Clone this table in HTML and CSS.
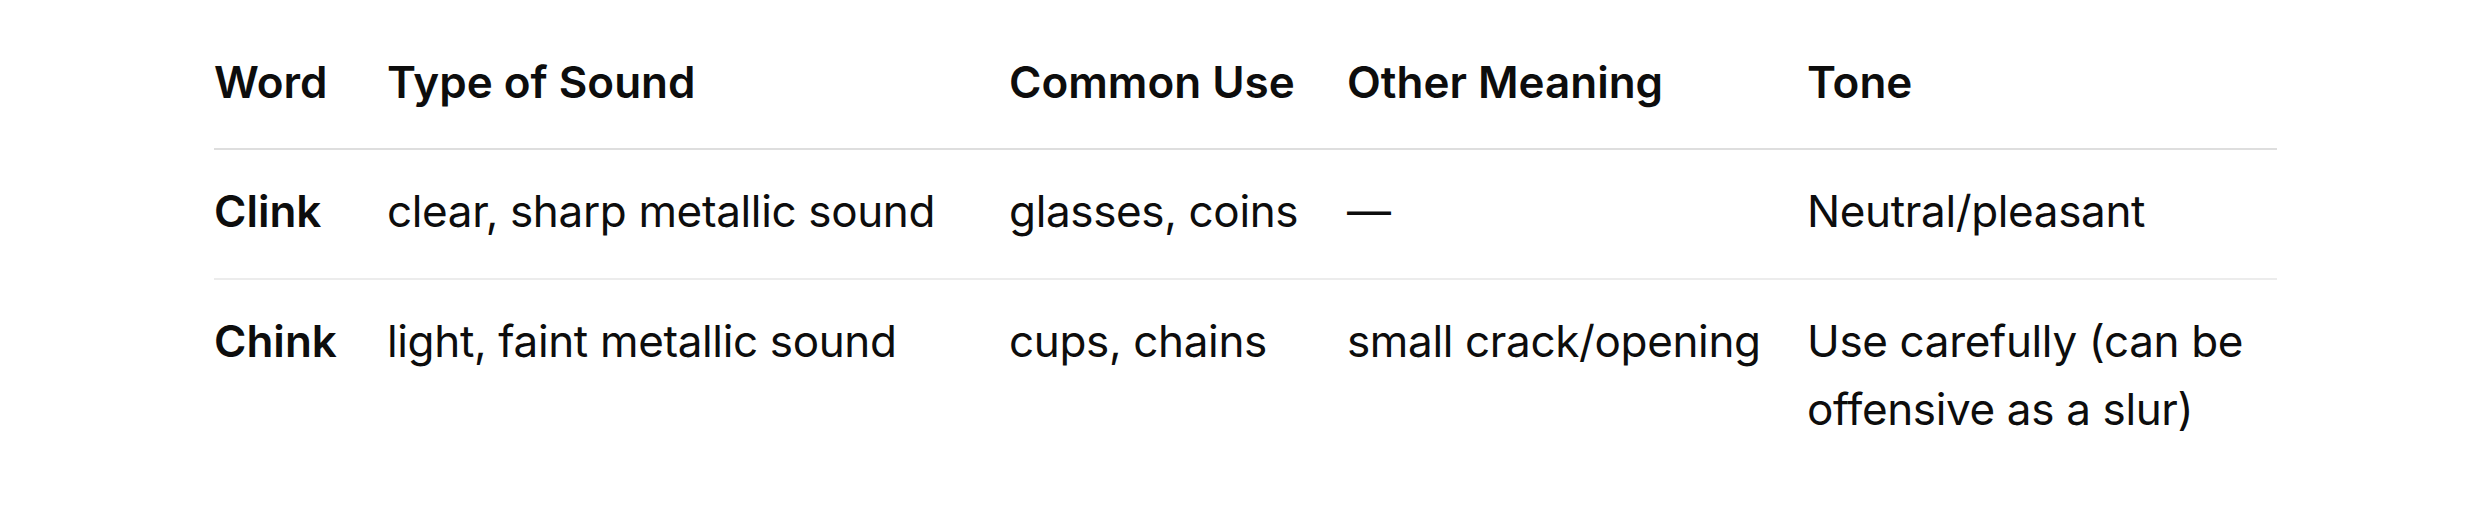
FILE: index.html
```html
<!DOCTYPE html>
<html lang="en">
<head>
<meta charset="utf-8">
<title>Clink vs Chink</title>
<link rel="stylesheet" href="styles.css">
</head>
<body>
<div class="wrap">
  <table class="words">
    <colgroup>
      <col class="c1"><col class="c2"><col class="c3"><col class="c4"><col class="c5">
    </colgroup>
    <thead>
      <tr>
        <th>Word</th>
        <th>Type of Sound</th>
        <th>Common Use</th>
        <th>Other Meaning</th>
        <th>Tone</th>
      </tr>
    </thead>
    <tbody>
      <tr>
        <td><strong>Clink</strong></td>
        <td>clear, sharp metallic sound</td>
        <td>glasses, coins</td>
        <td>—</td>
        <td>Neutral/pleasant</td>
      </tr>
      <tr>
        <td><strong>Chink</strong></td>
        <td>light, faint metallic sound</td>
        <td>cups, chains</td>
        <td>small crack/opening</td>
        <td>Use carefully (can be offensive as a slur)</td>
      </tr>
    </tbody>
  </table>
</div>
</body>
</html>
```

FILE: styles.css
```css
html, body {
  margin: 0;
  padding: 0;
  background: #ffffff;
}
body {
  font-family: Inter, "Noto Sans", "Liberation Sans", sans-serif;
  color: #0d0d0d;
  font-size: 44px;
  line-height: 68px;
}
.wrap {
  padding: 48px 0 0 214px;
}
.words {
  border-collapse: collapse;
  table-layout: fixed;
  width: 2063px;
}
.c1 { width: 173px; }
.c2 { width: 622px; }
.c3 { width: 338px; }
.c4 { width: 460px; }
.c5 { width: 470px; }
.words th {
  text-align: left;
  font-weight: 600;
  padding: 0 24px 32px 0;
  border-bottom: 2px solid #dedede;
}
.words td {
  padding: 27px 24px 33px 0;
  vertical-align: top;
  letter-spacing: -0.35px;
  border-bottom: 2px solid #ececec;
}
.words tbody tr:last-child td {
  border-bottom: none;
}
.words strong {
  font-weight: 600;
  letter-spacing: 0;
}
```
